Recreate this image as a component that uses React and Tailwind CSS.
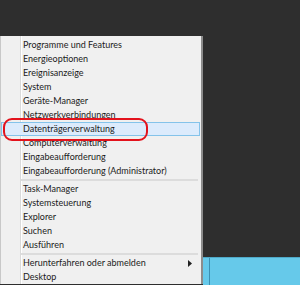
import React from "react";

const group1 = [
  "Programme und Features",
  "Energieoptionen",
  "Ereignisanzeige",
  "System",
  "Geräte-Manager",
  "Netzwerkverbindungen",
  "Datenträgerverwaltung",
  "Computerverwaltung",
  "Eingabeaufforderung",
  "Eingabeaufforderung (Administrator)",
];
const group2 = ["Task-Manager", "Systemsteuerung", "Explorer", "Suchen", "Ausführen"];

function Item({ label, selected, arrow }) {
  return (
    <div
      className={
        "h-[14px] flex items-center relative " +
        (selected ? "bg-[#dcebfc] outline outline-1 outline-[#84c3ea] -outline-offset-1" : "")
      }
    >
      <span className="pl-[22px] text-[9px] leading-[14px] text-[#1b1b1b] whitespace-nowrap">{label}</span>
      {arrow && (
        <svg className="absolute right-[8px] top-[4px]" width="4" height="7" viewBox="0 0 4 7">
          <path d="M0 0 L4 3.5 L0 7 Z" fill="#222" />
        </svg>
      )}
    </div>
  );
}

function Sep() {
  return (
    <div className="h-[4px] flex items-center pl-[20px] pr-[2px]">
      <div className="h-[2px] w-full bg-[#dcdcdc]" />
    </div>
  );
}

export default function App() {
  return (
    <div
      className="w-[300px] h-[285px] bg-[#2e2e2e] relative overflow-hidden flex flex-col"
      style={{ fontFamily: 'Lato, "Noto Sans", "Liberation Sans", sans-serif' }}
    >
      <div className="h-[36px] shrink-0" />
      <div className="flex flex-1">
        <div className="w-[203px] h-[248px] bg-[#f0f0f0] border-r-2 border-r-[#8c8c8c] border-l border-l-[#c8c8c8] relative pt-[2px]">
          <div className="absolute left-[19px] top-0 bottom-0 w-px bg-[#dadada]" />
          <div className="absolute left-[20px] top-0 bottom-0 w-px bg-white" />
          <div className="relative pr-[1px]">
            {group1.map((l) => (
              <Item key={l} label={l} selected={l === "Datenträgerverwaltung"} />
            ))}
            <Sep />
            {group2.map((l) => (
              <Item key={l} label={l} />
            ))}
            <Sep />
            <Item label="Herunterfahren oder abmelden" arrow />
            <Item label="Desktop" />
          </div>
        </div>
        <div className="flex-1 flex flex-col">
          <div className="flex-1" />
          <div className="h-[28px] bg-[#66c9ea] border-t border-t-[#4fa9c8] flex">
            <div className="w-[6px]" />
            <div className="w-px bg-[#3b8fb2]" />
          </div>
        </div>
      </div>
      <div className="absolute left-[3px] top-[118px] w-[145px] h-[23px] rounded-[9px] border-[2.5px] border-[#e3121c]" />
    </div>
  );
}
